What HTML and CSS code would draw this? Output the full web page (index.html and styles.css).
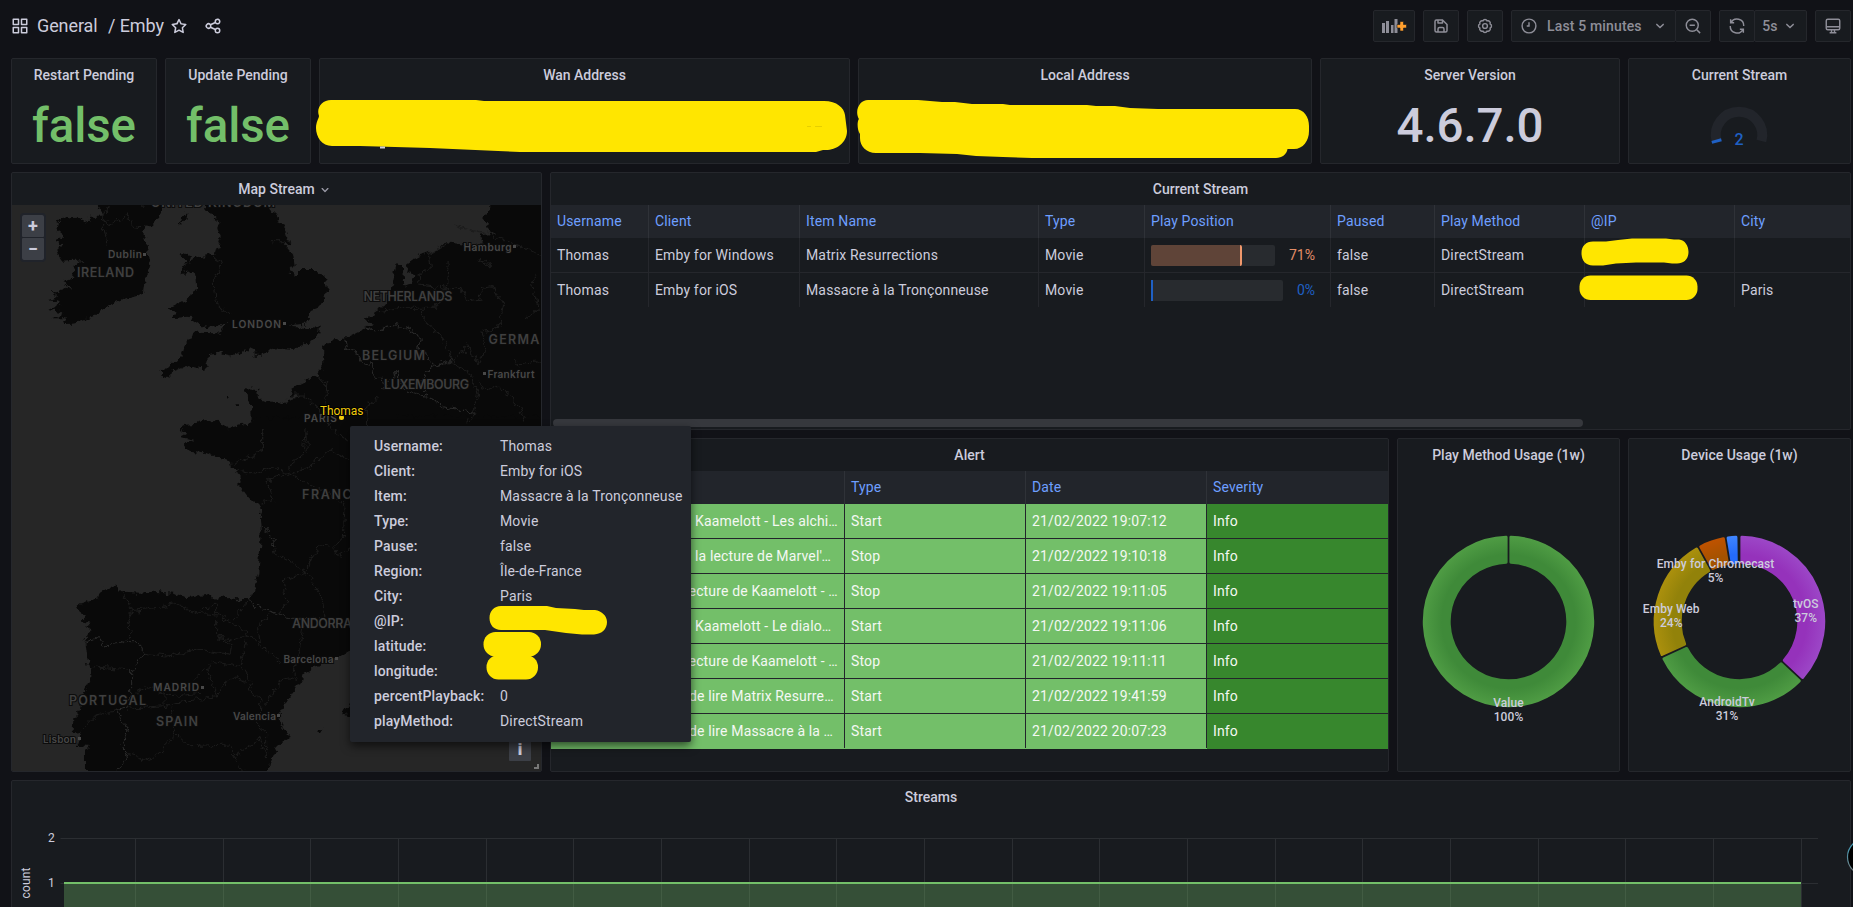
FILE: index.html
```html
<!DOCTYPE html>
<html lang="en">
<head>
<meta charset="utf-8">
<title>General / Emby</title>
<link rel="stylesheet" href="styles.css">
</head>
<body>
<svg class="defs" width="0" height="0">
  <symbol id="angle" viewBox="0 0 24 24"><path d="M17,9.17a1,1,0,0,0-1.41,0L12,12.71,8.46,9.17a1,1,0,0,0-1.41,0,1,1,0,0,0,0,1.42l4.24,4.24a1,1,0,0,0,1.42,0L17,10.59A1,1,0,0,0,17,9.17Z"/></symbol>
</svg>

<header class="nav">
  <div class="crumbs">
    <svg class="icon" viewBox="0 0 24 24"><path d="M10,13H3a1,1,0,0,0-1,1v7a1,1,0,0,0,1,1h7a1,1,0,0,0,1-1V14A1,1,0,0,0,10,13ZM9,20H4V15H9ZM21,2H14a1,1,0,0,0-1,1v7a1,1,0,0,0,1,1h7a1,1,0,0,0,1-1V3A1,1,0,0,0,21,2ZM20,9H15V4h5Zm1,4H14a1,1,0,0,0-1,1v7a1,1,0,0,0,1,1h7a1,1,0,0,0,1-1V14A1,1,0,0,0,21,13Zm-1,7H15V15h5ZM10,2H3A1,1,0,0,0,2,3v7a1,1,0,0,0,1,1h7a1,1,0,0,0,1-1V3A1,1,0,0,0,10,2ZM9,9H4V4H9Z"/></svg>
    <span class="folder">General</span><span class="dash">/ Emby</span>
    <svg class="icon star" viewBox="0 0 24 24"><path d="M22,9.67A1,1,0,0,0,21.14,9l-5.69-.83L12.9,3a1,1,0,0,0-1.8,0L8.55,8.16,2.86,9a1,1,0,0,0-.81.68,1,1,0,0,0,.25,1l4.13,4-1,5.68A1,1,0,0,0,6.9,21.44L12,18.77l5.1,2.67a.93.93,0,0,0,.46.12,1,1,0,0,0,.59-.19,1,1,0,0,0,.4-1l-1-5.68,4.13-4A1,1,0,0,0,22,9.67Zm-6.15,4a1,1,0,0,0-.29.88l.72,4.2-3.76-2a1.06,1.06,0,0,0-.94,0l-3.76,2,.72-4.2a1,1,0,0,0-.29-.88l-3-3,4.21-.61a1,1,0,0,0,.76-.55L12,5.7l1.88,3.82a1,1,0,0,0,.76.55l4.21.61Z"/></svg>
    <svg class="icon" viewBox="0 0 24 24"><path d="M18,14a4,4,0,0,0-3.08,1.48l-5.1-2.35a3.64,3.64,0,0,0,0-2.26l5.1-2.35A4,4,0,1,0,14,6a4.17,4.17,0,0,0,.07.71L8.79,9.14a4,4,0,1,0,0,5.72l5.28,2.43A4.17,4.17,0,0,0,14,18a4,4,0,1,0,4-4ZM18,4a2,2,0,1,1-2,2A2,2,0,0,1,18,4ZM6,14a2,2,0,1,1,2-2A2,2,0,0,1,6,14Zm12,6a2,2,0,1,1,2-2A2,2,0,0,1,18,20Z"/></svg>
  </div>
  <div class="tools">
    <div class="group"><button class="btn add">
      <svg width="24" height="14" viewBox="0 0 24 14"><path fill="#8e8e98" d="M0 4h3v10H0zM4 2h3v12H4zM9 6h2.500v8H9zM12.500 0h3v14h-3z"/><path class="plus" fill="#ff9f2e" stroke="#181b1f" stroke-width=".6" d="M18 2.500h3.500v3h3v3.500h-3v3H18V9h-3V5.500h3z"/></svg></button></div>
    <div class="group"><button class="btn sq"><svg class="icon" viewBox="0 0 24 24"><path d="m20.710 9.290-6-6a1 1 0 0 0-.32-.21A1.090 1.090 0 0 0 14 3H6a3 3 0 0 0-3 3v12a3 3 0 0 0 3 3h12a3 3 0 0 0 3-3v-8a1 1 0 0 0-.29-.71ZM9 5h4v2H9Zm6 14H9v-3a1 1 0 0 1 1-1h4a1 1 0 0 1 1 1Zm4-1a1 1 0 0 1-1 1h-1v-3a3 3 0 0 0-3-3h-4a3 3 0 0 0-3 3v3H6a1 1 0 0 1-1-1V6a1 1 0 0 1 1-1h1v3a1 1 0 0 0 1 1h6a1 1 0 0 0 1-1V6.410l4 4Z"/></svg></button></div>
    <div class="group"><button class="btn sq"><svg class="icon line" viewBox="0 0 24 24"><path d="M18.800 14.800a3.050 3.050 0 0 1-4 4 3.050 3.050 0 0 1-5.600 0 3.050 3.050 0 0 1-4-4 3.050 3.050 0 0 1 0-5.600 3.050 3.050 0 0 1 4-4 3.050 3.050 0 0 1 5.600 0 3.050 3.050 0 0 1 4 4 3.050 3.050 0 0 1 0 5.600z"/><circle cx="12" cy="12" r="3.200"/></svg></button></div>
    <div class="group">
      <button class="btn range"><svg class="icon line" viewBox="0 0 24 24"><circle cx="12" cy="12" r="9.200"/><path d="M12 7v5H9"/></svg><span>Last 5 minutes</span><svg class="icon chev"><use href="#angle"/></svg></button>
      <button class="btn sq joined"><svg class="icon line" viewBox="0 0 24 24"><circle cx="11" cy="11" r="8"/><path d="M17 17l4.500 4.500M7.500 11h7"/></svg></button>
    </div>
    <div class="group">
      <button class="btn sq"><svg class="icon line" viewBox="0 0 24 24"><path d="M3.500 3v4.700h4.700M4 7.600A9 9 0 0 1 21 12M20.500 21v-4.700h-4.700M20 16.400A9 9 0 0 1 3 12"/></svg></button>
      <button class="btn every joined"><span>5s</span><svg class="icon chev"><use href="#angle"/></svg></button>
    </div>
    <div class="group"><button class="btn sq"><svg class="icon line" viewBox="0 0 24 24"><rect x="3" y="3" width="18" height="14" rx="2"/><path d="M3 13h18M10 17v3M14 17v3M7.500 21h9"/></svg></button></div>
  </div>
</header>

<main class="grid">
  <section class="panel w2 h3"><h2>Restart Pending</h2><div class="stat ok">false</div></section>
  <section class="panel w2 h3"><h2>Update Pending</h2><div class="stat ok">false</div></section>
  <section class="panel w7 h3"><h2>Wan Address</h2></section>
  <section class="panel w6 h3"><h2>Local Address</h2></section>
  <section class="panel w4 h3"><h2>Server Version</h2><div class="stat">4.6.7.0</div></section>
  <section class="panel w3 h3"><h2>Current Stream</h2>
    <svg class="gauge" width="70" height="50" viewBox="-35 -35 70 50"><path d="M-22.400 6A23.200 23.200 0 1 1 22.400 6" fill="none" stroke="#22252b" stroke-width="10"/><path d="M-27.200 7.400L-17.600 4.800" stroke="#1f60c4" stroke-width="3"/><text y="9.500" text-anchor="middle">2</text></svg>
  </section>

  <section class="panel w7 h16 map"><h2>Map Stream<svg class="chev"><use href="#angle"/></svg></h2>
    <div class="mapbox">
      <svg class="carto" viewBox="12 205 529 566" width="529" height="566">
        <defs><filter id="coast" x="0" y="0" width="100%" height="100%" color-interpolation-filters="sRGB"><feTurbulence type="fractalNoise" baseFrequency=".16" numOctaves="3" seed="4"/><feDisplacementMap in="SourceGraphic" scale="9" xChannelSelector="R" yChannelSelector="G"/></filter></defs>
        <rect x="12" y="205" width="529" height="566" fill="#262626"/>
        <g filter="url(#coast)">
          <g class="land">
            <g transform="translate(0 165) scale(.35714 .33333)">
              <path d="M260 90H455V130L440 165 415 190 400 195 410 230 418 300 405 350 400 385 350 400 300 425 270 450 210 475 180 478 190 460 150 460 175 442 140 435 170 420 135 405 165 395 150 380 200 365 175 355 205 335 210 300 240 285 175 290 160 265 175 240 160 225 185 215 155 190 165 160 215 155 245 170 250 155 290 155Z"/>
              <path d="M500 182L505 160 525 145 522 165Z"/>
              <path d="M570 90L575 130 590 150 615 170 608 190 618 215 605 265 570 272 530 290 535 270 515 262 505 270 525 290 505 328 545 320 550 370 530 400 470 430 495 440 480 460 530 455 560 478 600 487 640 470 610 505 540 503 515 545 510 570 480 600 440 622 475 638 480 620 530 600 575 612 585 570 620 565 650 572 700 550 730 565 770 550 820 555 860 535 890 515 893 488 850 485 805 482 860 475 865 440 900 425 915 370 910 335 880 312 840 312 830 330 808 322 825 300 820 265 795 235 810 235 800 200 780 160 760 130 745 90Z"/>
              <path d="M1370 90V140L1352 160 1375 175 1358 190 1385 205 1345 212 1352 235 1310 240 1250 232 1225 258 1150 280 1140 320 1165 330 1140 370 1125 350 1130 310 1110 300 1100 350 1088 400 1062 435 1020 465 1045 480 1018 492 965 520 930 528 905 545 905 600 890 630 850 650 815 672 812 690 840 695 780 712 740 708 722 700 720 672 685 670 690 700 703 720 705 765 723 772H1560V90Z"/>
              <path d="M660 715h12v5h-12zM637 690h6v5h-6zM710 562h20v10h-20z"/>
            </g>
            <g transform="translate(0 420) scale(.33333)">
              <path d="M755 -8L757 10 720 15 680 28 662 5 640 0 610 5 585 12 548 15 538 32 562 38 540 50 578 60 548 72 568 95 600 98 640 108 665 118 690 125 692 140 712 155 722 185 718 198 745 235 778 250 775 258 790 285 780 300 782 325 780 400 775 460 762 510 745 537 710 538 670 532 650 540 615 522 560 532 520 522 460 515 420 518 370 515 345 500 325 500 300 515 295 535 255 545 230 562 240 578 260 590 245 605 272 608 258 625 275 632 262 648 257 670 262 710 268 745 268 780 245 830 240 870 220 895 218 940 245 935 232 975 270 978 258 990 258 1080H800L812 1020 830 985 872 950 845 920 835 885 870 830 895 790 915 778 905 765 940 740 990 728 1050 690 1700 680V-10Z"/>
              <path d="M1060 850L1020 878 1060 890ZM945 935L970 922 960 940Z"/>
            </g>
          </g>
          <g class="border" transform="translate(0 165) scale(.35714 .33333)">
            <path d="M300 130L285 160 310 180 355 150 375 185 415 190M290 180L300 240M400 100V135M600 270L620 300 600 350 605 410 630 440 650 450M760 230H800M1250 240L1200 270 1205 310 1170 330 1175 360 1250 370M1270 180L1370 210 1450 240 1520 270M1255 290L1250 370 1220 430 1120 430 1060 440M1180 430L1190 470 1240 520 1265 590 1310 620 1340 690 1325 745 1300 780M1250 375L1290 370 1310 410 1350 405 1345 370 1380 365 1410 420 1395 490 1350 500 1360 550 1340 600 1310 540 1270 590M1360 300L1345 285 1375 305 1365 290M1500 320L1490 350 1510 430 1470 465M1340 650L1360 680 1390 660 1440 700 1470 770M1440 580L1450 600 1510 590M890 630L915 660 910 760 930 790 975 830M815 690L850 690 890 730 905 750M735 795V865M860 800V860M1060 700L1030 720 1025 790"/>
            <path class="state" d="M965 520L970 550 1000 560 1010 590 1040 600 1045 640 1070 640 1075 670 1110 620 1120 660 1150 680 1200 695 1240 725 1290 735 1325 745M1020 490L1060 500 1090 480 1140 490 1180 520 1170 550 1195 570 1210 605 1180 640 1190 680M1210 605L1250 590 1265 590"/>
          </g>
          <g class="border" transform="translate(0 420) scale(.33333)">
            <path d="M790 30L785 95 740 115 700 130M915 30L910 100 875 130 865 160 820 140 760 160 715 150M865 160L930 140 990 90 1050 120M865 160L910 185 990 220 1035 260 1030 350 1005 380 1015 410 1050 385M800 180L820 240 780 250M800 180L865 165M825 385L830 405 880 430 920 460 960 520 972 590M920 460L935 410 960 375 1005 380M920 460L850 480 860 540 840 580M370 520L395 575 380 600 400 640 370 665M395 575L470 565 530 550 590 580 650 585 700 610 770 665 840 725M650 600V650L700 660 740 645M590 580L650 550 650 585M700 600L745 540M810 580L770 630 775 670M910 610L900 680 880 750 890 780M435 700L500 708 600 688 690 703 695 675 655 650M740 665L720 740 755 790 745 810 800 850 845 780 880 770M720 740L640 725 580 780M620 740L650 830 520 850 495 857 380 865M650 830L680 780 710 770 740 790M495 857V800M390 750L280 740M525 940L490 990 440 1020 385 1000M525 940L570 980 690 975 710 1005 780 955 800 1020M525 940L510 860M780 850L775 920 800 940V1000M245 930L290 885 350 872M410 820L440 800 510 830 600 820M700 1005L730 1055"/>
            <path class="state" d="M745 537L770 560 830 580 860 595 905 595 960 600M785 315L810 340 822 375M257 670L300 650 310 675 370 665 410 665 435 700 395 750 395 820 380 865 350 872 385 930 365 980 385 1000 350 1055"/>
          </g>
        </g>
        <g class="places big">
          <text x="151" y="207" textLength="124">UNITED KINGDOM</text><text x="77" y="277" textLength="57">IRELAND</text><text x="363.500" y="301" textLength="89">NETHERLANDS</text><text x="362" y="360" textLength="63">BELGIUM</text><text x="488.500" y="344" textLength="72">GERMANY</text><text x="384" y="388.500" textLength="85">LUXEMBOURG</text><text x="302" y="498.500" textLength="59">FRANCE</text><text x="292" y="628" textLength="60">ANDORRA</text><text x="69" y="704.500" textLength="77">PORTUGAL</text><text x="156" y="725.500" textLength="42">SPAIN</text>
        </g>
        <g class="places">
          <text x="108" y="258" textLength="34">Dublin</text><text x="232" y="327.500" textLength="49">LONDON</text><text x="463.500" y="250.500" textLength="48">Hamburg</text><text x="487.500" y="377.500" textLength="47">Frankfurt</text><text x="304" y="421.500" textLength="33">PARIS</text><text x="283.500" y="662.500" textLength="50">Barcelona</text><text x="153" y="691" textLength="46">MADRID</text><text x="233" y="719.500" textLength="43">Valencia</text><text x="43" y="742.500" textLength="33">Lisbon</text>
          <path d="M143 253h3v3h-3zM283 322h3v3h-3zM513 245h3v3h-3zM483 372h3v3h-3zM335 657h3v3h-3zM201 686h3v3h-3zM277 714h3v3h-3zM78 737h3v3h-3z"/>
        </g>
        <circle cx="341.500" cy="417.500" r="2.500" fill="#f2cc0c"/>
        <text class="who" x="320" y="414.500" textLength="43.500">Thomas</text>
      </svg>
      <div class="zoom"><span>+</span><span>−</span></div>
      <div class="info">i</div>
      <div class="corner"></div>
    </div>
  </section>

  <section class="panel w17 h7"><h2>Current Stream</h2>
    <div class="table streams">
      <div class="row head"><span>Username</span><span>Client</span><span>Item Name</span><span>Type</span><span>Play Position</span><span>Paused</span><span>Play Method</span><span>@IP</span><span>City</span></div>
      <div class="row"><span>Thomas</span><span>Emby for Windows</span><span>Matrix Resurrections</span><span>Movie</span><span class="gaugecell"><i class="track"><i class="fill warm" style="width:71.500%"></i></i><b class="warmtext">71%</b></span><span>false</span><span>DirectStream</span><span></span><span></span></div>
      <div class="row"><span>Thomas</span><span>Emby for iOS</span><span>Massacre à la Tronçonneuse</span><span>Movie</span><span class="gaugecell"><i class="track"><i class="fill cold" style="width:0%"></i></i><b class="coldtext">0%</b></span><span>false</span><span>DirectStream</span><span></span><span>Paris</span></div>
    </div>
    <div class="scroll"></div>
  </section>

  <section class="panel w11 h9"><h2>Alert</h2>
    <div class="table alerts">
      <div class="row head"><span></span><span>Type</span><span>Date</span><span>Severity</span></div>
      <div class="row"><span class="in-c">Kaamelott - Les alchimistes</span><span>Start</span><span>21/02/2022 19:07:12</span><span>Info</span></div>
      <div class="row"><span class="in-c">la lecture de Marvel's Avengers</span><span>Stop</span><span>21/02/2022 19:10:18</span><span>Info</span></div>
      <div class="row"><span class="in-a">lecture de Kaamelott - Les alchimistes</span><span>Stop</span><span>21/02/2022 19:11:05</span><span>Info</span></div>
      <div class="row"><span class="in-c">Kaamelott - Le dialogue</span><span>Start</span><span>21/02/2022 19:11:06</span><span>Info</span></div>
      <div class="row"><span class="in-a">lecture de Kaamelott - Le dialogue</span><span>Stop</span><span>21/02/2022 19:11:11</span><span>Info</span></div>
      <div class="row"><span class="in-b">de lire Matrix Resurrections</span><span>Start</span><span>21/02/2022 19:41:59</span><span>Info</span></div>
      <div class="row"><span class="in-b">de lire Massacre à la Tronçonneuse</span><span>Start</span><span>21/02/2022 20:07:23</span><span>Info</span></div>
    </div>
  </section>

  <section class="panel w3 h9"><h2>Play Method Usage (1w)</h2>
    <svg class="pie" id="method" viewBox="-110 -150 220 300" width="221" height="300">
      <defs>
        <radialGradient id="green" gradientUnits="userSpaceOnUse" cx="0" cy="0" r="86"><stop offset=".78" stop-color="#3f8a39"/><stop offset="1" stop-color="#4f9c44"/></radialGradient>
        <radialGradient id="purple" gradientUnits="userSpaceOnUse" cx="0" cy="0" r="86"><stop offset=".78" stop-color="#9532bb"/><stop offset="1" stop-color="#9c47c7"/></radialGradient>
        <radialGradient id="gold" gradientUnits="userSpaceOnUse" cx="0" cy="0" r="86"><stop offset=".78" stop-color="#92820a"/><stop offset="1" stop-color="#ab900d"/></radialGradient>
        <radialGradient id="rust" gradientUnits="userSpaceOnUse" cx="0" cy="0" r="86"><stop offset=".78" stop-color="#a35200"/><stop offset="1" stop-color="#bf5200"/></radialGradient>
        <radialGradient id="blue" gradientUnits="userSpaceOnUse" cx="0" cy="0" r="86"><stop offset=".78" stop-color="#246bfd"/><stop offset="1" stop-color="#3f86ff"/></radialGradient>
      </defs>
      <g class="slices"></g>
      <text y="86">Value</text><text y="100">100%</text>
    </svg>
  </section>
  <section class="panel w3 h9"><h2>Device Usage (1w)</h2>
    <svg class="pie" id="device" viewBox="-110 -150 220 300" width="221" height="300">
      <g class="slices"></g>
      <text x="-24" y="-54">Emby for Chromecast</text><text x="-24" y="-40">5%</text>
      <text x="66.500" y="-14">tvOS</text><text x="66.500" y="0">37%</text>
      <text x="-68.500" y="-9">Emby Web</text><text x="-68.500" y="6">24%</text>
      <text x="-12.500" y="85">AndroidTv</text><text x="-12.500" y="99">31%</text>
    </svg>
  </section>

  <section class="panel w24 h4"><h2>Streams</h2>
    <svg class="graph" viewBox="12 813 1839 94" width="1839" height="94">
      <path class="gridline" d="M60.500 838.500H1818M60.500 883.500H1818"/>
      <g id="ticks" class="gridline"></g>
      <rect x="64" y="883" width="1737" height="24" fill="rgba(115,191,105,.32)"/>
      <rect x="64" y="882" width="1737" height="2" fill="#73bf69"/>
      <text x="55" y="842" text-anchor="end">2</text><text x="55" y="887" text-anchor="end">1</text>
      <text class="axis" transform="translate(30 883) rotate(-90)" text-anchor="middle" textLength="31">count</text>
    </svg>
  </section>
</main>

<aside class="tip">
  <dl>
    <dt>Username:</dt><dd>Thomas</dd><dt>Client:</dt><dd>Emby for iOS</dd><dt>Item:</dt><dd>Massacre à la Tronçonneuse</dd><dt>Type:</dt><dd>Movie</dd><dt>Pause:</dt><dd>false</dd><dt>Region:</dt><dd>Île-de-France</dd><dt>City:</dt><dd>Paris</dd><dt>@IP:</dt><dd></dd><dt>latitude:</dt><dd></dd><dt>longitude:</dt><dd></dd><dt>percentPlayback:</dt><dd>0</dd><dt>playMethod:</dt><dd>DirectStream</dd>
  </dl>
</aside>

<svg class="marks" width="1853" height="907" viewBox="0 0 1853 907">
  <g fill="#ffe600">
    <path d="M331 100H476L484 101H824C837 101 844 108 845 115L847 131C847 143 836 150 826 150H823L816 152H520L498 151 430 148 360 146H332C322 146 316 137 316 128C316 122 319 118 319 116C316 108 322 100 331 100Z"/>
    <path d="M868 100H918L942 102H955L972 104H1003L1010 105H1087L1096 106H1115L1130 108 1158 109H1295C1304 109 1309 117 1309 126V131C1309 141 1303 149 1294 149H1287.500C1287 154 1282 158 1276 158H1032L1003 157 976 156 957 154 920 153 876 153C866 153 860 146 860 138V134C857 130 857 121 859 119C854 110 860 100 868 100Z"/>
    <path d="M1593 241.500H1606L1618 240 1632 238.500H1666L1674 239.500H1679C1685 240 1688.500 246 1688.500 252C1688.500 259 1684 263.500 1677 263.500H1672L1664 262.500H1636L1616 263.500 1603 265.500H1593C1585 265.500 1581.500 260 1581.500 253C1581.500 246 1586 241.500 1593 241.500Z"/>
    <rect x="1579.500" y="275.500" width="118" height="24.500" rx="11"/>
    <path d="M501 606H547L556 608 575 609 584 610H595C602 611 607 616 607 622C607 629 602 634 594 634.500H582L566 633 545 630H501C494 630 489.500 625 489.500 618C489.500 611 494 606 501 606Z"/>
    <rect x="483.500" y="632" width="57.500" height="24.500" rx="12"/><rect x="486.500" y="655" width="51.500" height="24.500" rx="12"/>
  </g>
  <rect x="380" y="146.500" width="5" height="2" fill="#ccccdc"/>
  <path d="M807 126.500h4M815 126.500h7" stroke="#e6cf00" stroke-width="1"/>
  <defs><linearGradient id="ring" x1="0" y1="0" x2="0" y2="1"><stop offset="0" stop-color="#38a3c4"/><stop offset="1" stop-color="#777"/></linearGradient></defs>
  <circle cx="1866" cy="857" r="18.500" fill="#000" stroke="url(#ring)" stroke-width="1.200"/>
</svg>
<script src="charts.js"></script>
</body>
</html>
```
FILE: styles.css
```css
* { box-sizing: border-box; }
body { margin: 0; width: 1853px; height: 907px; overflow: hidden; position: relative; background: #111217; color: #ccccdc; font: 400 14px/22px Roboto, sans-serif; letter-spacing: .15px; }
.defs { position: absolute; }
.icon { width: 18px; height: 18px; fill: currentColor; flex: none; }
.line { fill: none; stroke: currentColor; stroke-width: 1.9; }

.nav { height: 50px; padding: 2px 2px 0 11px; display: flex; justify-content: space-between; align-items: center; }
.crumbs { display: flex; align-items: center; font-size: 18px; letter-spacing: -.1px; }
.folder { margin-left: 8px; width: 71px; }
.dash { width: 62px; }
.star { margin-right: 16px; }
.tools { display: flex; gap: 8px; }
.group { display: flex; }
.btn { height: 32px; padding: 0 8px; display: flex; align-items: center; justify-content: center; background: #181b1f; border: 1px solid #25272c; border-radius: 2px; color: #8e8e98; font: 500 14px Roboto, sans-serif; letter-spacing: .15px; }
.sq { width: 36px; padding: 0; }
.add { width: 42px; }
.add svg { overflow: visible; }
.joined { margin-left: -1px; }
.range { width: 165px; justify-content: flex-start; }
.range span { margin: 0 9px; white-space: nowrap; }
.every { width: 53px; }
.every span { margin-right: 3px; }
.chev { width: 18px; height: 18px; fill: currentColor; }

.grid { margin-left: 11px; width: 1840px; display: grid; grid-template-columns: repeat(24, minmax(0, 1fr)); grid-auto-rows: 30px; gap: 8px; padding-top: 8px; }
.w2 { grid-column: span 2; } .w3 { grid-column: span 3; } .w4 { grid-column: span 4; } .w6 { grid-column: span 6; } .w7 { grid-column: span 7; } .w11 { grid-column: span 11; } .w17 { grid-column: span 17; } .w24 { grid-column: span 24; }
.h3 { grid-row: span 3; } .h4 { grid-row: span 4; } .h7 { grid-row: span 7; } .h9 { grid-row: span 9; } .h16 { grid-row: span 16; }
.panel { background: #181b1f; border: 1px solid #25272c; border-radius: 2px; display: flex; flex-direction: column; min-width: 0; overflow: hidden; }
h2 { margin: 0; height: 32px; flex: none; font: 500 14px/32px Roboto, sans-serif; letter-spacing: 0; text-align: center; }
h2 .chev { width: 16px; height: 16px; margin: 0 -18px 0 2px; vertical-align: -4px; fill: #9a9aa6; }
.stat { font-weight: 500; font-size: 47.5px; line-height: 71px; text-align: center; letter-spacing: -.1px; }
.ok { color: #73bf69; }
.gauge { margin: 9px auto 0; position: relative; left: -.5px; }
.gauge text { font: 500 16px Roboto, sans-serif; letter-spacing: 0; fill: #1f60c4; }

.map { overflow: hidden; }
.mapbox { position: relative; flex: 1; }
.carto { display: block; }
.land { fill: #090909; }
.border { fill: none; stroke: #1c1c1c; stroke-width: 3; }
.state { stroke: #2b2b2b; }
.places { fill: #484848; font: 600 10.2px Inter, sans-serif; paint-order: stroke; stroke: #0c0c0c; stroke-width: 2px; letter-spacing: 0; }
.places path { stroke-width: 0; }
.big { font-size: 12.5px; fill: #3f3f3f; }
.who { font: 400 12px Roboto, sans-serif; fill: #f2cc0c; paint-order: stroke; stroke: #000; stroke-width: 2px; }
.zoom { position: absolute; left: 10px; top: 10px; width: 22px; display: grid; gap: 1px; outline: 2px solid #20232a; border-radius: 2px; background: #20232a; }
.zoom span, .info { height: 22px; background: #3c3f46; font: 700 18px/21px Roboto, sans-serif; text-align: center; color: #ccccdc; border-radius: 1px; }
.info { position: absolute; right: 10px; bottom: 10px; width: 22px; font: 700 16px/21px "DejaVu Sans", sans-serif; }
.corner { position: absolute; right: 2px; bottom: 2px; width: 5px; height: 5px; border-right: 2px solid #777; border-bottom: 2px solid #777; }

.row { display: grid; height: 35px; line-height: 34px; border-bottom: 1px solid #25272c; }
.row > span { padding: 0 6px; border-right: 1px solid #25272c; white-space: nowrap; overflow: hidden; text-overflow: ellipsis; }
.row > span:last-child { border-right: 0; }
.head { height: 33px; line-height: 32px; background: #22252b; color: #6e9fff; border: 0; }
.head > span { border-color: #2f3238; }
.streams .row { grid-template-columns: 98px 151px 239px 106px 186px 104px 150px 150px 1fr; }
.row:last-child { border-bottom-color: transparent; }
.row .gaugecell { display: flex; align-items: center; padding-right: 15px; }
.track { flex: 1; height: 21px; background: #282b2f; border-radius: 2px; display: flex; }
.fill { display: block; box-sizing: content-box; }
.warm { background: #5f4438; border-right: 2px solid #f0986c; border-radius: 2px; }
.cold { border-left: 2px solid #1f60c4; }
.gaugecell b { font-weight: 400; margin-left: 14px; letter-spacing: 0; }
.warmtext { color: #e38e68; } .coldtext { color: #1f60c4; }
.scroll { width: 1030px; height: 8px; margin: auto 0 2px 2px; border-radius: 4px; background: #36383d; }

.alerts .row { grid-template-columns: 294px 181px 181px 1fr; }
.alerts .row:not(.head) { background: #73bf69; color: #f4f8f3; border-bottom-color: #23252b; }
.alerts .row:last-child { border-bottom-color: #73bf69 !important; }
.alerts .row:not(.head) > span { border-right-color: #23252b; }
.alerts .row:not(.head) > span:last-child { background: #37872d; }
.alerts .row:last-child > span:last-child { margin-bottom: -1px; }
.row > .in-a { padding-left: 134px; } .row > .in-b { padding-left: 138px; } .row > .in-c { padding-left: 144px; }

.pie { display: block; margin-top: 1px; }
.pie text { font: 500 12px Roboto, sans-serif; letter-spacing: .1px; fill: #ccccdc; text-anchor: middle; }
.graph { display: block; flex: none; }
.graph text { font: 400 12px Roboto, sans-serif; fill: #ccccdc; }
.gridline { stroke: #2b2e32; stroke-width: 1; fill: none; }

.tip { position: absolute; left: 350px; top: 426px; width: 341px; height: 316px; background: #22252b; border-radius: 2px; box-shadow: 0 4px 10px rgba(0,0,0,.6); padding: 8px 0 0 24px; }
.tip dl { margin: 0; display: grid; grid-template-columns: 126px 1fr; grid-auto-rows: 25px; line-height: 25px; }
.tip dt { font-weight: 500; }
.tip dd { margin: 0; }
.marks { position: absolute; left: 0; top: 0; }
```
FILE: charts.js
```js
const NS = 'http://www.w3.org/2000/svg';

// Ring slice between two clockwise angles in degrees, inset so a round join softens its corners.
function slice(from, to, color) {
  const join = 1.5, gap = 0.9 + join, outer = 86 - join, inner = 58 + join;
  const at = (deg, r, side) => {
    const a = deg * Math.PI / 180 + side * Math.asin(gap / r);
    return `${(r * Math.sin(a)).toFixed(2)} ${(-r * Math.cos(a)).toFixed(2)}`;
  };
  const large = to - from > 180 ? 1 : 0;
  const p = document.createElementNS(NS, 'path');
  p.setAttribute('d', `M${at(from, outer, 1)}A${outer} ${outer} 0 ${large} 1 ${at(to, outer, -1)}L${at(to, inner, -1)}A${inner} ${inner} 0 ${large} 0 ${at(from, inner, 1)}Z`);
  p.setAttribute('fill', `url(#${color})`);
  p.setAttribute('stroke', `url(#${color})`);
  p.setAttribute('stroke-width', join * 2);
  p.setAttribute('stroke-linejoin', 'round');
  return p;
}

document.querySelector('#method .slices').append(slice(0, 360, 'green'));
document.querySelector('#device .slices').append(
  slice(0, 133.2, 'purple'), slice(133.2, 245.3, 'green'), slice(245.3, 331, 'gold'),
  slice(331, 350.6, 'rust'), slice(350.6, 359.2, 'blue'));

const ticks = document.getElementById('ticks');
for (let i = 0; i < 20; i++) {
  const line = document.createElementNS(NS, 'path');
  line.setAttribute('d', `M${Math.round(135 + i * 87.67) + 0.5} 838V907`);
  ticks.append(line);
}
```
